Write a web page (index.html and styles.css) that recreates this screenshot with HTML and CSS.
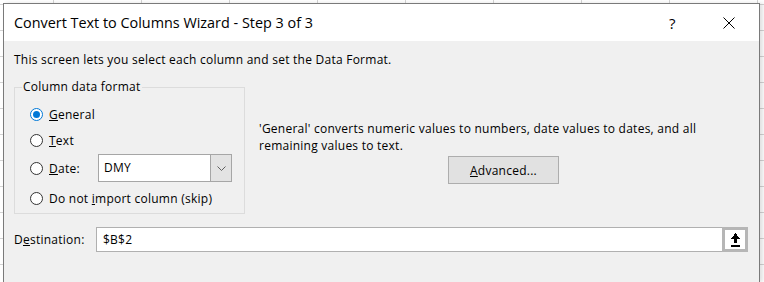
FILE: index.html
```html
<!DOCTYPE html>
<html>
<head>
<meta charset="utf-8">
<link rel="stylesheet" href="styles.css">
</head>
<body>
<div class="dialog">
  <div class="titlebar">
    <span class="title">Convert Text to Columns Wizard - Step 3 of 3</span>
    <span class="help">?</span>
    <span class="close"><svg width="12" height="12" viewBox="0 0 12 12"><path d="M0.5 0.5 L11.5 11.5 M11.5 0.5 L0.5 11.5" stroke="#000" stroke-width="1" fill="none"/></svg></span>
  </div>
  <div class="content">
    <p class="intro">This screen lets you select each column and set the Data Format.</p>
    <div class="main">
      <fieldset class="group">
        <legend>Column data format</legend>
        <div class="row r1"><span class="radio checked"></span><span class="lbl"><u>G</u>eneral</span></div>
        <div class="row r2"><span class="radio"></span><span class="lbl"><u>T</u>ext</span></div>
        <div class="row r3"><span class="radio"></span><span class="lbl date-lbl"><u>D</u>ate:</span>
          <div class="combo"><span class="combo-val">DMY</span><span class="combo-btn"><svg width="9" height="5" viewBox="0 0 9 5"><path d="M0.5 0.5 L4.5 4.5 L8.5 0.5" stroke="#606060" stroke-width="1" fill="none"/></svg></span></div>
        </div>
        <div class="row r4"><span class="radio"></span><span class="lbl">Do not <u>i</u>mport column (skip)</span></div>
      </fieldset>
      <div class="info">
        <p class="desc">'General' converts numeric values to numbers, date values to dates, and all<br>remaining values to text.</p>
        <button class="btn"><u>A</u>dvanced...</button>
      </div>
    </div>
    <div class="dest">
      <span class="dest-label">D<u>e</u>stination:</span>
      <div class="dest-field"><span class="dest-val">$B$2</span></div>
      <span class="refbtn"><svg width="9" height="14" viewBox="0 0 9 14" shape-rendering="crispEdges"><polygon points="4.5,0 9,6 6,6 6,10 3,10 3,6 0,6" fill="#000"/><rect x="0" y="12" width="9" height="2" fill="#000"/></svg></span>
    </div>
  </div>
</div>
</body>
</html>
```
FILE: styles.css
```css
html, body {
  margin: 0;
}
body {
  padding: 3px 0 0 3px;
  height: 282px;
  box-sizing: border-box;
  overflow: hidden;
  background-color: #fff;
  background-image:
    linear-gradient(to right, #d4d4d4 1px, transparent 1px),
    linear-gradient(to bottom, #d4d4d4 1px, transparent 1px);
  background-size: 88px 100%, 100% 26px;
  background-position: 53px 0, 0 30px;
  font-family: "Open Sans", "Noto Sans", sans-serif;
  font-size: 12px;
  color: #000;
}
.dialog {
  width: 757px;
  height: 279px;
  box-sizing: border-box;
  border: 1px solid #7a7a7a;
  border-bottom: none;
  background: #f0f0f0;
  box-shadow: 3px 0 4px rgba(0,0,0,0.12);
}
.titlebar {
  height: 37px;
  background: #fff;
  display: flex;
  align-items: center;
  padding-left: 10px;
}
.title {
  font-size: 14.4px;
  flex: 1;
}
.help {
  font-size: 15px;
  width: 12px;
  margin-right: 42px;
}
.close {
  display: flex;
  width: 12px;
  margin-right: 24px;
}
.content {
  padding: 11px 10px 0 10px;
  letter-spacing: 0.25px;
}
.intro {
  margin: 0;
  line-height: 16px;
}
.main {
  display: flex;
  margin-top: 11px;
}
.group {
  width: 231px;
  box-sizing: border-box;
  margin: 0;
  border: 1px solid #dcdcdc;
  padding: 9px 0 5px 15px;
}
.group legend {
  padding: 0 1px;
  margin-left: -8px;
  line-height: 16px;
}
.row {
  display: flex;
  align-items: center;
  height: 20px;
}
.r2, .r4 { margin-top: 6px; }
.r3 { margin-top: 4px; height: 28px; }
.radio {
  width: 13px;
  height: 13px;
  box-sizing: border-box;
  border: 1px solid #333;
  border-radius: 50%;
  background: #fff;
  flex: none;
  margin-right: 6px;
  position: relative;
}
.radio.checked {
  border-color: #0078d7;
}
.radio.checked::after {
  content: "";
  position: absolute;
  left: 2px;
  top: 2px;
  width: 7px;
  height: 7px;
  border-radius: 50%;
  background: #0078d7;
}
.date-lbl {
  width: 49px;
  flex: none;
}
.combo {
  width: 134px;
  height: 28px;
  box-sizing: border-box;
  border: 1px solid #a6a6a6;
  background: #fff;
  display: flex;
}
.combo-val {
  flex: 1;
  padding-left: 5px;
  line-height: 26px;
}
.combo-btn {
  width: 20px;
  border-left: 1px solid #a6a6a6;
  background: #e3e3e3;
  display: flex;
  align-items: center;
  justify-content: center;
}
.info {
  margin-left: 14px;
  padding-top: 41px;
}
.desc {
  margin: 0;
  line-height: 17px;
}
.btn {
  margin: 2px 0 0 189px;
  width: 111px;
  height: 28px;
  border: 1px solid #adadad;
  background: #e1e1e1;
  font-family: inherit;
  font-size: 12px;
  letter-spacing: 0.25px;
  color: #000;
  padding: 0;
}
.dest {
  display: flex;
  align-items: center;
  margin-top: 13px;
}
.dest-label {
  width: 82px;
  flex: none;
}
.dest-field {
  width: 626px;
  height: 25px;
  box-sizing: border-box;
  border: 1px solid #b0b0b0;
  border-right: none;
  background: #fff;
  display: flex;
  align-items: center;
  padding-left: 6px;
}
.refbtn {
  width: 26px;
  height: 25px;
  box-sizing: border-box;
  border: 3px solid #b6b6b6;
  background: #fff;
  display: flex;
  align-items: center;
  justify-content: center;
}
```
